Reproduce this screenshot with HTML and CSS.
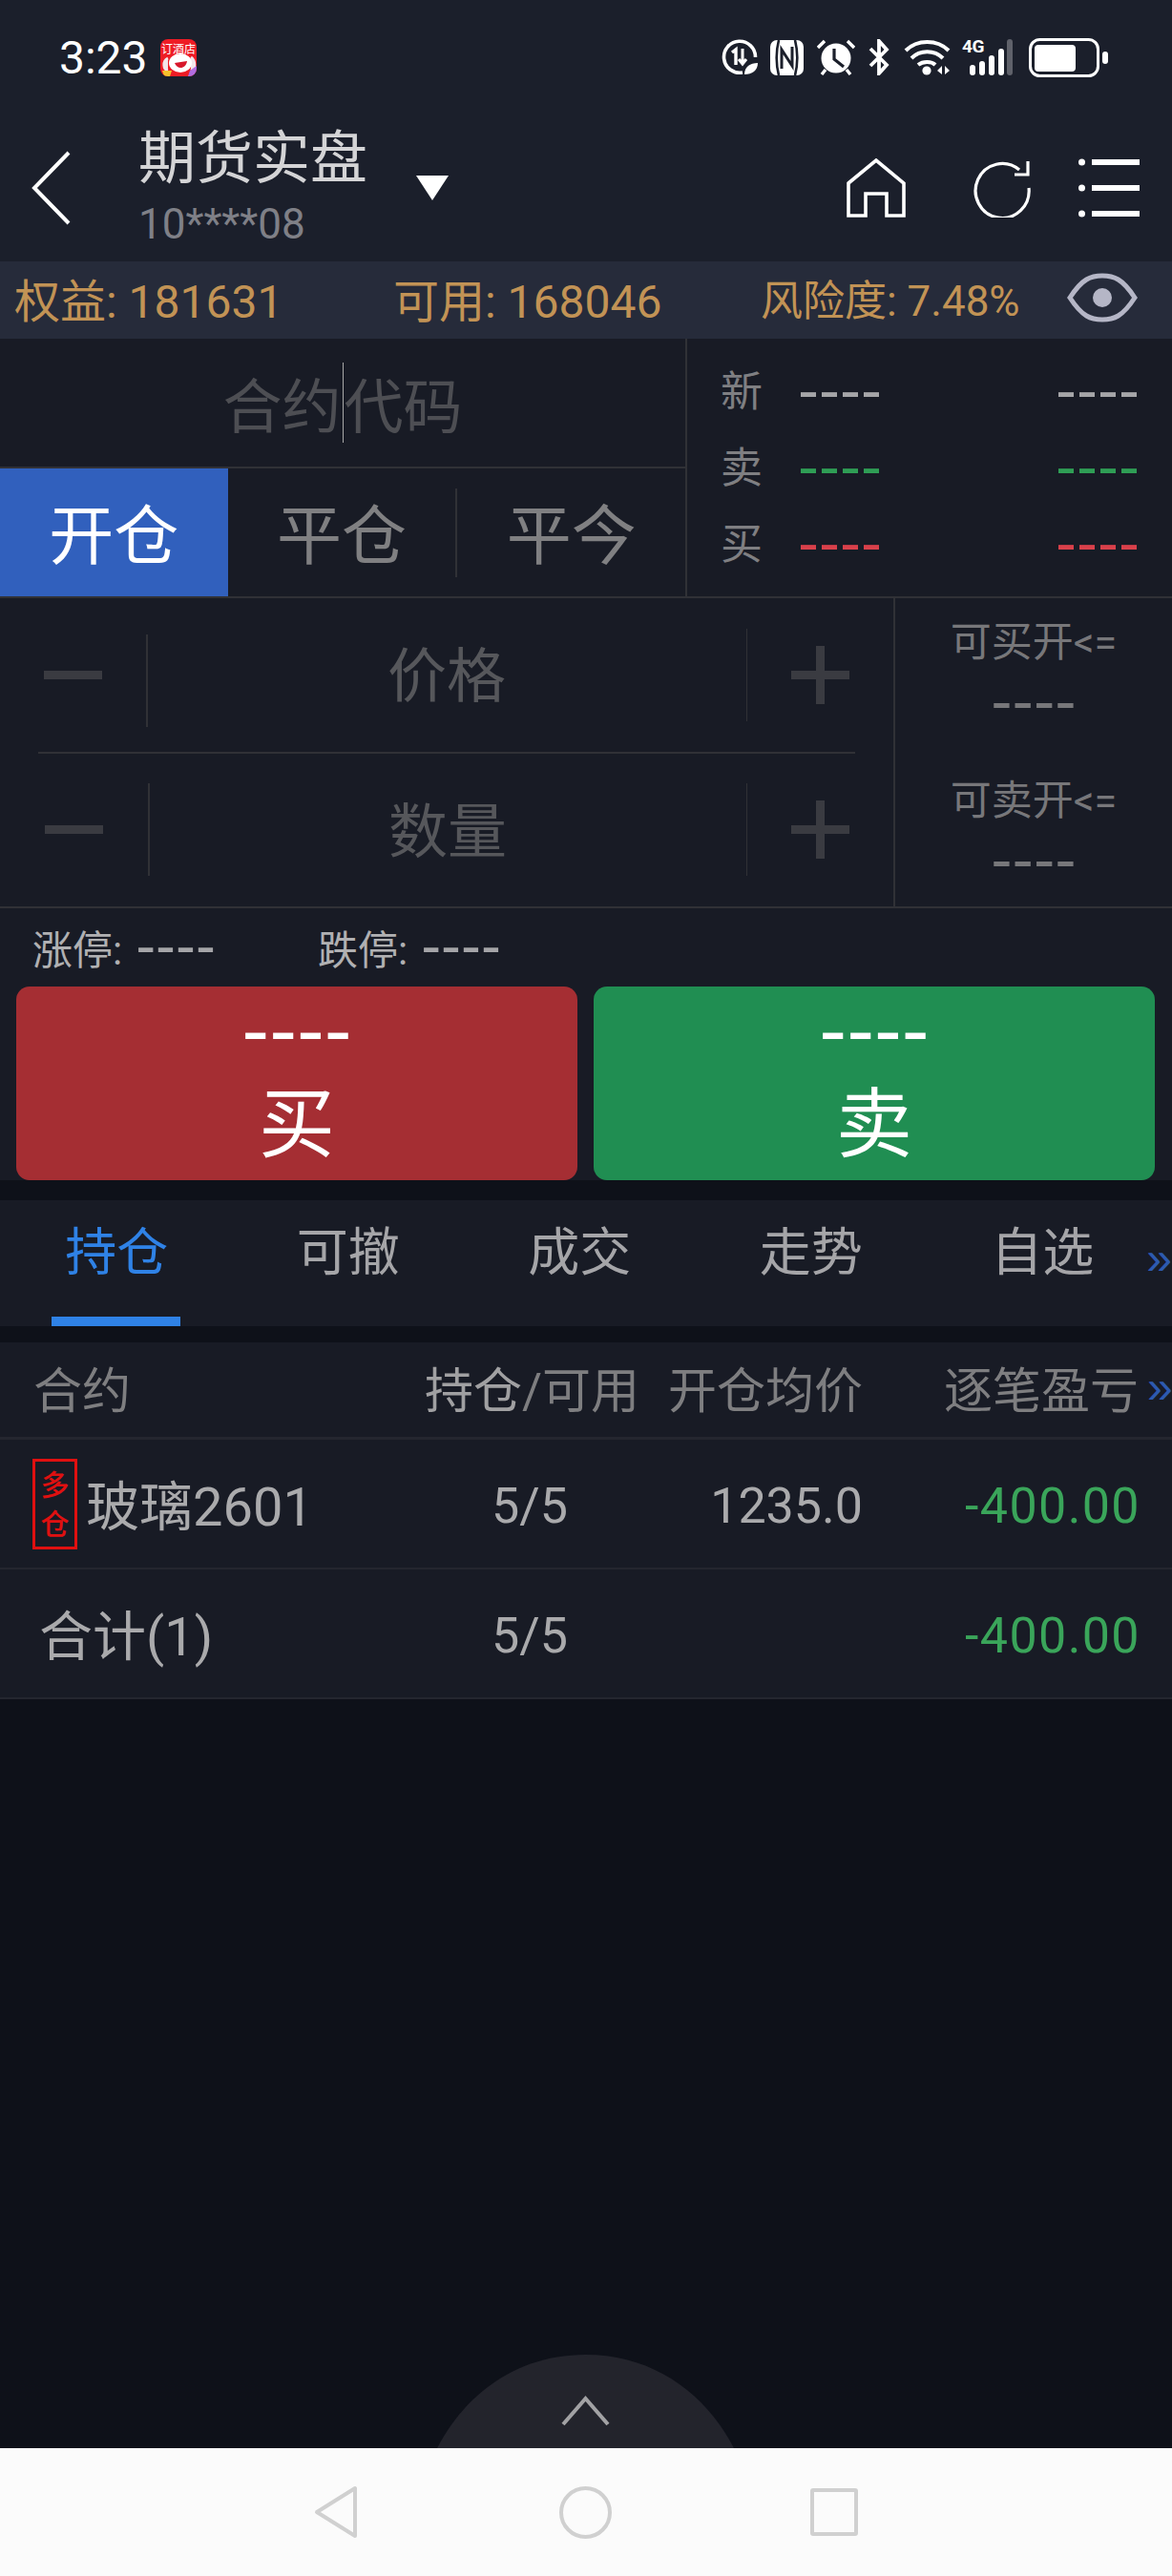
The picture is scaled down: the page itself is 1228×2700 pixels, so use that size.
FILE: index.html

```html
<!doctype html>
<html lang="zh">
<head>
    <meta charset="utf-8">
    <title>期货实盘</title>
    <link rel="stylesheet" href="styles.css">
</head>
<body>
<div id="app" class="app">

    <!-- status bar -->
    <div class="statusbar">
        <span class="clock">3:23</span>
        <div class="app_badge">
            <span class="app_badge_txt">订酒店</span>
            <svg class="app_badge_dog" viewBox="0 0 38 26">
                <path d="M8 7 C2 10 3 19 8 20 M32 6 C37 10 37 18 32 20" fill="#f3e6ea" stroke="#f3e6ea" stroke-width="3"/>
                <ellipse cx="21" cy="12" rx="12" ry="10" fill="#fff"/>
                <path d="M15 12 L28 10 C27 18 18 20 15 12Z" fill="#d8182c"/>
                <path d="M2 20 H12 L10 26 H4Z" fill="#f6c12c"/>
                <path d="M31 20 L38 15 V26 H29Z" fill="#b06ce0"/>
            </svg>
        </div>
        <div class="status_icons">
            <svg class="ic_data" viewBox="0 0 38 38" fill="none" stroke="#fff">
                <path d="M22 35 A16.5 16.5 0 1 1 35.5 19" stroke-width="3.6"/>
                <path d="M11 14 L15 11 V27" stroke-width="3.4"/>
                <path d="M22 10 V25 M18 21 L22 26 L26 21" stroke-width="3"/>
                <path d="M24 37 C24 29 30 25 38 25 C38 33 32 37 24 37Z" fill="#fff" stroke="none"/>
            </svg>
            <svg class="ic_nfc" viewBox="0 0 35 37">
                <rect width="35" height="37" rx="7" fill="#fff"/>
                <path d="M9 0 C6 12 6 25 9 37 M26 0 C29 12 29 25 26 37" stroke="#1b1f2b" stroke-width="2.6" fill="none"/>
                <path d="M12 30 V10 L23 27 V7" stroke="#1b1f2b" stroke-width="3" fill="none"/>
            </svg>
            <svg class="ic_alarm" viewBox="0 0 40 38">
                <circle cx="20" cy="20" r="15.5" fill="#fff"/>
                <path d="M18 10 V21 L28 29" stroke="#1b1f2b" stroke-width="3.2" fill="none"/>
                <path d="M1 9 L8 2 M39 9 L32 2 M5 37 L9 32 M35 37 L31 32" stroke="#fff" stroke-width="3.4" fill="none"/>
            </svg>
            <svg class="ic_bt" viewBox="0 0 22 38" fill="none" stroke="#fff" stroke-width="3.8">
                <path d="M2 10 L19 27 L11 36 V2 L19 11 L2 28"/>
            </svg>
            <svg class="ic_wifi" viewBox="0 0 49 38" fill="none" stroke="#fff" stroke-width="4">
                <path d="M2 12 C14 0 35 0 47 12"/>
                <path d="M8 20 C17 11 32 11 41 20"/>
                <path d="M15 27 C20 23 29 23 33 27"/>
                <circle cx="24" cy="33" r="4.6" fill="#fff" stroke="none"/>
                <path d="M35 33 L40 28 V37Z M43 28 L48 33 L43 37Z" fill="#fff" stroke="none"/>
            </svg>
            <div class="ic_signal">
                <span class="signal_label">4G</span>
                <span class="signal_bars">
                    <i class="bar bar_1"></i><i class="bar bar_2"></i><i class="bar bar_3"></i><i class="bar bar_4"></i>
                </span>
                <i class="bar bar_5"></i>
            </div>
            <svg class="ic_batt" viewBox="0 0 84 41">
                <rect x="1.5" y="1.5" width="71" height="38" rx="10" fill="none" stroke="#fff" stroke-width="3"/>
                <rect x="6" y="7" width="43" height="28" rx="4" fill="#fff"/>
                <rect x="77" y="14" width="6" height="13" rx="3" fill="#fff"/>
            </svg>
        </div>
    </div>

    <!-- title bar -->
    <div class="topbar">
        <svg class="ic_back" viewBox="0 0 42 78" fill="none" stroke="#fff" stroke-width="4">
            <path d="M39 2 L3 39 L39 76"/>
        </svg>
        <div class="acct">
            <div class="acct_name">期货实盘</div>
            <div class="acct_no">10****08</div>
        </div>
        <span class="acct_arrow"></span>
        <div class="top_icons">
            <svg class="ic_home" viewBox="0 0 62 62" fill="none" stroke="#fff" stroke-width="3.6">
                <path d="M2 26 L31 2 L60 26 V60 H42 V37 H20 V60 H2Z"/>
            </svg>
            <svg class="ic_refresh" viewBox="0 0 60 62" fill="none" stroke="#fff" stroke-width="3.2">
                <path d="M48 12 A28 28.5 0 1 0 58 31"/>
                <path d="M57 3 V17 H43"/>
            </svg>
            <svg class="ic_menu" viewBox="0 0 64 62" fill="#fff">
                <circle cx="3.5" cy="4" r="3.5"/><rect x="14" y="1" width="50" height="6"/>
                <circle cx="3.5" cy="31" r="3.5"/><rect x="14" y="28" width="50" height="6"/>
                <circle cx="3.5" cy="58" r="3.5"/><rect x="14" y="55" width="50" height="6"/>
            </svg>
        </div>
    </div>

    <!-- funds -->
    <div class="funds">
        <span class="funds_a">权益: 181631</span>
        <span class="funds_b">可用: 168046</span>
        <span class="funds_c">风险度: 7.48%</span>
        <svg class="ic_eye" viewBox="0 0 74 52">
            <path d="M3 26 C16 6 25 3 37 3 C49 3 58 6 71 26 C58 46 49 49 37 49 C25 49 16 46 3 26Z" fill="none" stroke="#b5b6c6" stroke-width="5"/>
            <circle cx="37" cy="26" r="10" fill="#b5b6c6"/>
        </svg>
    </div>

    <!-- contract and quote -->
    <div class="quote_panel">
        <div class="order_col">
            <div class="code_input">
                <span>合约</span><i class="caret"></i><span>代码</span>
            </div>
            <div class="order_tabs">
                <div class="order_tab order_tab_on">开仓</div>
                <div class="order_tab">平仓</div>
                <i class="order_sep"></i>
                <div class="order_tab">平今</div>
            </div>
        </div>
        <div class="quote_col">
            <div class="quote_row">
                <span class="quote_lbl">新</span>
                <span class="dash dash_q dash_grey">----</span>
                <span class="dash dash_q dash_grey">----</span>
            </div>
            <div class="quote_row">
                <span class="quote_lbl">卖</span>
                <span class="dash dash_q dash_green">----</span>
                <span class="dash dash_q dash_green">----</span>
            </div>
            <div class="quote_row">
                <span class="quote_lbl">买</span>
                <span class="dash dash_q dash_red">----</span>
                <span class="dash dash_q dash_red">----</span>
            </div>
        </div>
    </div>

    <!-- price and volume -->
    <div class="entry_panel">
        <div class="step_col">
            <div class="step_row">
                <div class="step_btn"><i class="minus"></i></div>
                <i class="step_sep step_sep_low"></i>
                <div class="step_lbl">价格</div>
                <i class="step_sep"></i>
                <div class="step_btn"><i class="plus"></i></div>
            </div>
            <div class="step_line"></div>
            <div class="step_row">
                <div class="step_btn step_btn_wide"><i class="minus"></i></div>
                <i class="step_sep"></i>
                <div class="step_lbl">数量</div>
                <i class="step_sep"></i>
                <div class="step_btn"><i class="plus"></i></div>
            </div>
        </div>
        <div class="avail_col">
            <div class="avail_block">
                <div class="avail_lbl">可买开&lt;=</div>
                <div class="dash dash_avail">----</div>
            </div>
            <div class="avail_block">
                <div class="avail_lbl">可卖开&lt;=</div>
                <div class="dash dash_avail">----</div>
            </div>
        </div>
    </div>

    <!-- limits and buy/sell -->
    <div class="trade_panel">
        <div class="limits">
            <div class="limit_item">涨停:<span class="dash dash_limit">----</span></div>
            <div class="limit_item">跌停:<span class="dash dash_limit">----</span></div>
        </div>
        <div class="trade_btns">
            <div class="trade_btn trade_buy">
                <span class="dash dash_btn">----</span>
                <span class="trade_txt">买</span>
            </div>
            <div class="trade_btn trade_sell">
                <span class="dash dash_btn">----</span>
                <span class="trade_txt">卖</span>
            </div>
        </div>
    </div>

    <!-- lists -->
    <div class="list_tabs">
        <div class="list_tab list_tab_on">持仓</div>
        <div class="list_tab">可撤</div>
        <div class="list_tab">成交</div>
        <div class="list_tab">走势</div>
        <div class="list_tab">自选</div>
        <span class="more more_tabs">»</span>
    </div>

    <div class="pos_table">
        <div class="pos_row pos_head">
            <div>合约</div>
            <div class="col_mid"><span class="head_on">持仓</span>/可用</div>
            <div class="col_num">开仓均价</div>
            <div class="col_num">逐笔盈亏</div>
            <div class="more more_head">»</div>
        </div>
        <div class="pos_row">
            <div class="pos_name">
                <span class="pos_tag">多<br>仓</span><span class="pos_text">玻璃2601</span>
            </div>
            <div class="col_mid">5/5</div>
            <div class="col_num">1235.0</div>
            <div class="col_num col_loss">-400.00</div>
        </div>
        <div class="pos_row">
            <div class="pos_total">合计(1)</div>
            <div class="col_mid">5/5</div>
            <div class="col_num"></div>
            <div class="col_num col_loss">-400.00</div>
        </div>
    </div>

    <div class="filler">
        <svg class="pull_up" viewBox="0 0 311 98">
            <path d="M0 98 C30 40 85 0 155.5 0 C226 0 281 40 311 98Z" fill="#23242c"/>
            <path d="M132 73 L155.5 46 L179 73" fill="none" stroke="#a2a2a4" stroke-width="4"/>
        </svg>
    </div>

    <!-- android nav -->
    <div class="navbar">
        <div class="nav_cell">
            <svg class="nav_back" viewBox="0 0 46 56" fill="none" stroke="#d0d0d0" stroke-width="4" stroke-linejoin="round">
                <path d="M43 3 V53 L3 28Z"/>
            </svg>
        </div>
        <div class="nav_cell"><i class="nav_home"></i></div>
        <div class="nav_cell"><i class="nav_recent"></i></div>
    </div>
</div>
</body>
</html>
```

FILE: styles.css

```css
* {
    box-sizing: border-box;
}

html, body {
    margin: 0;
    padding: 0;
    background: #0e1119;
}

.app {
    width: 1228px;
    height: 2700px;
    display: flex;
    flex-direction: column;
    overflow: hidden;
    font-family: Roboto, "Noto Sans CJK SC", sans-serif;
    color: #aaaaac;
}

i {
    display: block;
}

/* status bar */
.statusbar {
    height: 120px;
    background: #1b1f2b;
    display: flex;
    align-items: center;
    padding: 0 66px 0 62px;
}
.clock {
    width: 106px;
    font-size: 48px;
    color: #fff;
}
.app_badge {
    position: relative;
    width: 38px;
    height: 39px;
    border-radius: 8px;
    overflow: hidden;
    background: #ee1c25;
}
.app_badge_txt {
    display: block;
    padding-top: 5px;
    font-size: 12px;
    line-height: 12px;
    color: #fff;
    text-align: center;
    white-space: nowrap;
}
.app_badge_dog {
    position: absolute;
    left: 0;
    bottom: 0;
    width: 38px;
    height: 26px;
}
.status_icons {
    margin-left: auto;
    display: flex;
    align-items: center;
}
.ic_data { width: 38px; height: 38px; margin-right: 13px; }
.ic_nfc { width: 35px; height: 37px; margin-right: 14px; }
.ic_alarm { width: 40px; height: 38px; margin-right: 14px; }
.ic_bt { width: 22px; height: 38px; margin-right: 15px; }
.ic_wifi { width: 49px; height: 38px; margin-right: 12px; }
.ic_batt { width: 84px; height: 41px; }
.ic_signal {
    position: relative;
    width: 70px;
    height: 38px;
}
.signal_label {
    position: absolute;
    left: 0;
    top: -3px;
    font-size: 19px;
    line-height: 22px;
    font-weight: 700;
    color: #fff;
    letter-spacing: -0.5px;
}
.signal_bars {
    position: absolute;
    left: 8px;
    bottom: 0;
    display: flex;
    align-items: flex-end;
    gap: 4px;
}
.bar {
    width: 6px;
    border-radius: 3px;
    background: #fff;
}
.bar_1 { height: 11px; }
.bar_2 { height: 15px; }
.bar_3 { height: 21px; }
.bar_4 { height: 28px; }
.bar_5 {
    position: absolute;
    left: 47px;
    bottom: 0;
    height: 38px;
    background: #5f616a;
}

/* title bar */
.topbar {
    height: 154px;
    background: #1b1f2b;
    display: flex;
    align-items: center;
    padding: 0 34px 0 33px;
}
.ic_back {
    width: 42px;
    height: 78px;
}
.acct {
    margin-left: 70px;
    width: 240px;
    padding-top: 5px;
}
.acct_name {
    font-size: 60px;
    line-height: 70px;
    color: #d4d4d6;
    white-space: nowrap;
}
.acct_no {
    font-size: 44px;
    line-height: 66px;
    color: #7f8087;
}
.acct_arrow {
    margin-left: 51px;
    width: 0;
    height: 0;
    border-left: 17px solid transparent;
    border-right: 17px solid transparent;
    border-top: 26px solid #fff;
}
.top_icons {
    margin-left: auto;
    display: flex;
    align-items: center;
}
.ic_home { width: 62px; height: 62px; margin-right: 71px; }
.ic_refresh { width: 60px; height: 62px; margin-right: 50px; }
.ic_menu { width: 64px; height: 62px; }

/* funds */
.funds {
    height: 81px;
    background: #262b3a;
    display: flex;
    align-items: center;
    padding: 0 0 5px 15px;
    font-size: 48px;
    color: #c29355;
    white-space: nowrap;
}
.funds_a { width: 397px; }
.funds_b { width: 385px; }
.funds_c { width: 321px; font-size: 44px; }
.ic_eye {
    width: 74px;
    height: 52px;
}

/* contract and quote */
.quote_panel {
    height: 272px;
    background: #181b25;
    display: flex;
    border-bottom: 2px solid #303136;
}
.order_col {
    width: 720px;
    border-right: 2px solid #303136;
    display: flex;
    flex-direction: column;
}
.code_input {
    height: 136px;
    border-bottom: 2px solid #303136;
    display: flex;
    align-items: center;
    justify-content: center;
    font-size: 62px;
    color: #4d4e53;
}
.caret {
    width: 1px;
    height: 84px;
    background: #a8a8a8;
    margin: 0 1px;
}
.order_tabs {
    flex: 1;
    display: flex;
    align-items: stretch;
}
.order_tab {
    flex: 1;
    display: flex;
    align-items: center;
    justify-content: center;
    padding-bottom: 4px;
    font-size: 68px;
    color: #808082;
}
.order_tab_on {
    background: #3160bd;
    color: #fff;
}
.order_sep {
    width: 2px;
    height: 93px;
    align-self: center;
    background: #303136;
}
.quote_col {
    flex: 1;
    padding: 18px 34px 0 35px;
    display: flex;
    flex-direction: column;
}
.quote_row {
    height: 80px;
    display: flex;
    align-items: center;
}
.quote_lbl {
    width: 81px;
    margin-bottom: 12px;
    font-size: 44px;
    color: #7f7f82;
}

/* the dashes are wide, DejaVu hyphens have the right proportions */
.dash {
    font-family: "DejaVu Sans", sans-serif;
    white-space: nowrap;
    color: #a5a5a8;
}
.dash_q {
    margin-bottom: 8px;
    font-size: 61px;
    line-height: 60px;
}
.dash_q + .dash_q {
    margin-left: auto;
}
.dash_grey { color: #a5a5a8; }
.dash_green { color: #2f9e55; }
.dash_red { color: #d9404a; }

/* price and volume */
.entry_panel {
    height: 325px;
    background: #181b25;
    display: flex;
    border-bottom: 2px solid #303136;
}
.step_col {
    width: 938px;
    border-right: 2px solid #303136;
    display: flex;
    flex-direction: column;
}
.step_row {
    flex: 1;
    display: flex;
    align-items: center;
}
.step_line {
    height: 2px;
    margin: 0 40px;
    background: #303136;
}
.step_btn {
    width: 153px;
    display: flex;
    justify-content: center;
}
.step_btn_wide {
    width: 155px;
}
.step_sep {
    width: 1.5px;
    height: 97px;
    background: #303136;
}
.step_sep_low {
    margin-top: 12px;
}
.step_lbl {
    flex: 1;
    margin-bottom: 6px;
    text-align: center;
    font-size: 62px;
    color: #56575b;
}
.minus, .plus {
    position: relative;
    width: 61px;
    height: 9px;
    background: #3a3b41;
}
.plus::after {
    content: "";
    position: absolute;
    left: 26px;
    top: -26px;
    width: 9px;
    height: 61px;
    background: #3a3b41;
}
.avail_col {
    flex: 1;
    padding-top: 14px;
    text-align: center;
}
.avail_block + .avail_block {
    margin-top: 39px;
}
.avail_lbl {
    font-size: 43px;
    line-height: 65px;
    color: #77777a;
}
.dash_avail {
    margin-top: -3px;
    font-size: 62px;
    line-height: 65px;
    color: #77777a;
}

/* limits and buy/sell */
.trade_panel {
    height: 285px;
    background: #181b25;
    display: flex;
    flex-direction: column;
}
.limits {
    height: 82px;
    padding: 0 0 2px 34px;
    display: flex;
    align-items: center;
    font-size: 42px;
    color: #b0b0b2;
}
.limit_item {
    width: 299px;
    display: flex;
    align-items: center;
    white-space: nowrap;
}
.dash_limit {
    font-size: 58px;
    line-height: 50px;
    margin-left: 14px;
    color: #a5a5a8;
}
.trade_btns {
    flex: 1;
    display: flex;
    gap: 17px;
    padding: 0 18px 0 17px;
}
.trade_btn {
    flex: 1;
    border-radius: 14px;
    display: flex;
    flex-direction: column;
    align-items: center;
    color: #fff;
}
.trade_buy { background: #a52e33; }
.trade_sell { background: #208e52; }
.dash_btn {
    font-size: 80px;
    line-height: 70px;
    margin-top: 12px;
    color: #fff;
}
.trade_txt {
    font-size: 80px;
    line-height: 90px;
    margin-top: 18px;
}

/* lists */
.list_tabs {
    position: relative;
    margin-top: 21px;
    height: 132px;
    background: #181b25;
    display: flex;
    padding-left: 1px;
}
.list_tab {
    width: 242.5px;
    height: 132px;
    padding-top: 21px;
    text-align: center;
    font-size: 54px;
    line-height: 70px;
    color: #a5a5a8;
}
.list_tab_on {
    color: #2f82e6;
    position: relative;
}
.list_tab_on::after {
    content: "";
    position: absolute;
    left: 53px;
    bottom: 0;
    width: 135px;
    height: 10px;
    background: #2f82e6;
}
.more {
    font-family: "Liberation Sans", sans-serif;
    color: #2d5ab0;
    font-size: 48px;
    line-height: 48px;
}
.more_tabs {
    position: absolute;
    right: 0;
    top: 37px;
}
.more_head {
    margin-left: 9px;
}

.pos_table {
    margin-top: 17px;
    background: #181b25;
}
.pos_row {
    height: 136px;
    display: grid;
    grid-template-columns: 410px 220px 239px 289px 35px;
    align-items: center;
    padding: 4px 0 0 35px;
    border-bottom: 2px solid #24262f;
    font-size: 52px;
    color: #aaaaac;
}
.pos_head {
    height: 102px;
    padding: 0 0 6px 35px;
    border-bottom-width: 3px;
    font-size: 51px;
    color: #7e7e80;
    white-space: nowrap;
}
.head_on {
    color: #a0a0a2;
}
.col_mid {
    text-align: center;
}
.col_num {
    text-align: right;
}
.col_loss {
    color: #3aa55a;
    letter-spacing: 1.4px;
    margin-right: -2px;
}
.pos_name {
    display: flex;
    align-items: center;
    font-size: 56px;
    white-space: nowrap;
}
.pos_text {
    margin-bottom: 8px;
}
.pos_tag {
    width: 47px;
    height: 95px;
    margin: 0 9px 4px -1px;
    border: 3px solid #e01010;
    color: #e01010;
    font-size: 30px;
    font-weight: 500;
    line-height: 41px;
    text-align: center;
    padding-top: 4px;
}
.pos_total {
    padding-left: 6px;
    margin-bottom: 7px;
    font-size: 56px;
}

.filler {
    flex: 1;
    position: relative;
}
.pull_up {
    position: absolute;
    left: 458px;
    bottom: 0;
    width: 311px;
    height: 98px;
}

/* android nav */
.navbar {
    height: 134px;
    background: #fbfbfb;
    display: flex;
    justify-content: center;
    align-items: center;
    padding-right: 2px;
}
.nav_cell {
    width: 261px;
    display: flex;
    justify-content: center;
}
.nav_back {
    width: 46px;
    height: 56px;
}
.nav_home {
    width: 55px;
    height: 55px;
    border: 4px solid #d0d0d0;
    border-radius: 50%;
}
.nav_recent {
    width: 50px;
    height: 50px;
    border: 4px solid #d0d0d0;
    border-radius: 3px;
}
```
